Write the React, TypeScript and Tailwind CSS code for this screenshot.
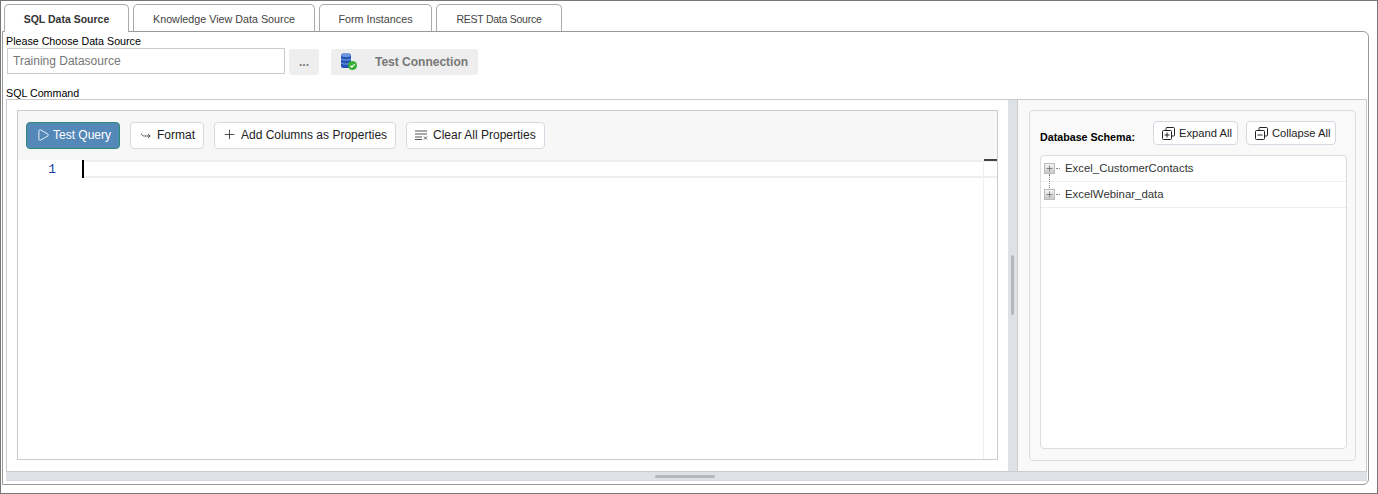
import { Play, Plus } from 'lucide-react';

function DatabaseIcon() {
  return (
    <svg width="18" height="18" viewBox="0 0 18 18">
      <rect x="1" y="0.500" width="10" height="14.500" rx="2" fill="#2456b8" />
      <ellipse cx="6" cy="2.200" rx="5" ry="1.800" fill="#6c94e0" />
      <path d="M1 6c1 1.400 9 1.400 10 0M1 10c1 1.400 9 1.400 10 0" stroke="#9db9ee" strokeWidth="0.800" fill="none" />
      <circle cx="12.500" cy="12.500" r="4.500" fill="#35b035" />
      <path d="M10.300 12.600l1.600 1.600 2.800-3" stroke="#fff" strokeWidth="1.200" fill="none" />
    </svg>
  );
}

function FormatIcon() {
  return (
    <svg width="12" height="12" viewBox="0 0 12 12" fill="none" stroke="#555" strokeWidth="1">
      <path d="M1.500 4.500c0 2 1.500 2.500 3 2.500H10" />
      <path d="M8 5l2.200 2L8 9" />
    </svg>
  );
}

function ClearIcon() {
  return (
    <svg width="13" height="10" viewBox="0 0 13 10" fill="none" stroke="#555" strokeWidth="1">
      <path d="M0 1h12M0 4h12M0 7h7M0 9.500h7" />
      <path d="M9 6.500l3 3M12 6.500l-3 3" />
    </svg>
  );
}

function StackIcon({ expand }: { expand: boolean }) {
  return (
    <svg width="13" height="13" viewBox="0 0 13 13" fill="none" stroke="#222" strokeWidth="1">
      <path d="M4 3V1.500a1 1 0 0 1 1-1h6.500a1 1 0 0 1 1 1V8a1 1 0 0 1-1 1H10" />
      <rect x="0.500" y="3.500" width="9" height="9" rx="1" />
      <path d="M2.500 8h5" />
      {expand && <path d="M5 5.500v5" />}
    </svg>
  );
}

function TreeToggle() {
  return (
    <span className="flex h-[11px] w-[11px] items-center justify-center border border-[#bbb] bg-gradient-to-b from-[#f4f4f4] to-[#c8c8c8] text-[#444]">
      <Plus size={9} strokeWidth={1.5} />
    </span>
  );
}

function ToolButton({ children, className }: { children: React.ReactNode; className: string }) {
  return (
    <button className={`flex h-[27px] items-center rounded-[4px] border border-[#d5dae2] bg-white pb-[2px] text-[12px] text-[#222] ${className}`}>
      {children}
    </button>
  );
}

const tabs = [
  { label: 'Knowledge View Data Source', className: 'w-[182px] pt-[2px] text-[10.750px]' },
  { label: 'Form Instances', className: 'w-[113px] pt-[2px] text-[10.750px]' },
  { label: 'REST Data Source', className: 'w-[126px] pt-[4px] text-[10.500px] tracking-[-0.25px]' },
];

export default function App() {
  return (
    <div className="flex h-[494px] w-[1378px] flex-col overflow-hidden border border-[#777] bg-white font-['Liberation_Sans',sans-serif]">
      {/* Tabs */}
      <div className="relative z-10 ml-[3px] mt-[3px] flex h-[28px] gap-[4px]">
        <div className="flex h-[28px] w-[125px] items-center justify-center rounded-t-[5px] border border-b-0 border-[#aaa] bg-white pt-[3px] text-[10.500px] font-bold text-[#333]">
          SQL Data Source
        </div>
        {tabs.map((tab) => (
          <div
            key={tab.label}
            className={`flex h-[27px] items-center justify-center rounded-t-[5px] border border-b-0 border-[#aaa] bg-white text-[#444] ${tab.className}`}
          >
            {tab.label}
          </div>
        ))}
      </div>

      {/* Panel */}
      <div className="-mt-[1px] ml-[1px] mr-[8px] flex h-[454px] flex-col rounded-br-[6px] rounded-tr-[6px] border border-[#999] pl-[3px] pr-[1px]">
        <div className="mt-[3px] h-[13px] text-[10.700px] leading-[13px] text-black">Please Choose Data Source</div>
        <div className="flex h-[27px] items-start">
          <div className="ml-[1px] flex h-[26px] w-[278px] items-center border border-[#ccc] px-[5px] text-[12px] text-[#777]">Training Datasource</div>
          <div className="ml-[4px] mt-[1px] flex h-[26px] w-[30px] items-center justify-center rounded-[3px] bg-[#eee] text-[12px] font-bold text-[#777]">...</div>
          <div className="ml-[12px] mt-[1px] flex h-[26px] w-[147px] items-center rounded-[3px] bg-[#eee] pl-[9px] text-[12px] font-bold text-[#777]">
            <DatabaseIcon />
            <span className="ml-[17px]">Test Connection</span>
          </div>
        </div>
        <div className="mt-[12px] h-[12px] text-[10.700px] leading-[12px] text-black">SQL Command</div>

        <div className="flex h-[372px] border-l border-r border-t border-[#ccc]">
          {/* Editor pane */}
          <div className="flex w-[1001px] flex-col px-[10px] pt-[10px]">
            <div className="flex h-[350px] flex-col border border-[#ccc]">
              <div className="flex h-[49px] items-start gap-[10px] bg-[#f7f7f8] pl-[8px] pt-[11px]">
                <button className="flex h-[27px] w-[94px] items-center rounded-[4px] border border-[#2e8b6f] bg-[#5488b8] pb-[2px] pl-[9px] text-[12px] text-white">
                  <Play size={14} strokeWidth={1.5} />
                  <span className="ml-[3px]">Test Query</span>
                </button>
                <ToolButton className="w-[74px] pl-[9px]">
                  <FormatIcon />
                  <span className="ml-[5px]">Format</span>
                </ToolButton>
                <ToolButton className="w-[182px] pl-[7px]">
                  <Plus size={15} strokeWidth={1.25} />
                  <span className="ml-[4px]">Add Columns as Properties</span>
                </ToolButton>
                <ToolButton className="w-[139px] pl-[8px]">
                  <ClearIcon />
                  <span className="ml-[5px]">Clear All Properties</span>
                </ToolButton>
              </div>
              <div className="relative flex-1 bg-white">
                <div className="flex h-[18px] items-stretch">
                  <div className="w-[64px] pr-[26px] text-right font-['Liberation_Mono',monospace] text-[13px] leading-[20px] text-[#1a3fa0]">1</div>
                  <div className="w-[2px] bg-black" />
                  <div className="flex-1 border-b-2 border-t-2 border-[#eee]" />
                </div>
                <div className="absolute bottom-0 right-0 top-0 w-[14px] border-l border-[#eee]">
                  <div className="-mt-px h-[2px] bg-[#444]" />
                </div>
              </div>
            </div>
          </div>

          {/* Vertical splitter */}
          <div className="flex w-[10px] items-center justify-center border-r border-[#ccc] bg-[#dee2e6] pb-[2px]">
            <div className="h-[60px] w-[3px] rounded-full bg-[#b3b8bd]" />
          </div>

          {/* Schema pane */}
          <div className="flex-1 bg-[#f9f9f9] pl-[11px] pr-[10px] pt-[10px]">
            <div className="h-[351px] rounded-[4px] border border-[#ddd] pl-[10px] pr-[8px] pt-[10px]">
              <div className="flex h-[24px] items-start">
                <div className="mt-[10px] w-[113px] text-[10.700px] font-bold leading-[13px] text-black">Database Schema:</div>
                <button className="flex h-[24px] w-[85px] items-center rounded-[4px] border border-[#d5dae2] bg-white pl-[8px] text-[11.200px] text-[#222]">
                  <StackIcon expand />
                  <span className="ml-[4px]">Expand All</span>
                </button>
                <button className="ml-[8px] flex h-[24px] w-[90px] items-center rounded-[4px] border border-[#d5dae2] bg-white pl-[8px] text-[11.200px] text-[#222]">
                  <StackIcon expand={false} />
                  <span className="ml-[4px]">Collapse All</span>
                </button>
              </div>
              <div className="mt-[10px] h-[294px] rounded-[4px] border border-[#ddd] bg-white">
                {['Excel_CustomerContacts', 'ExcelWebinar_data'].map((name, i) => (
                  <div key={name} className="relative flex h-[26px] items-center border-b border-[#eee] pl-[3px] text-[11.400px] text-[#333]">
                    <TreeToggle />
                    <span className="ml-[1px] w-[4px] border-t border-dotted border-[#888]" />
                    <span className="ml-[5px] pt-[1px]">{name}</span>
                    {i === 0 && <span className="absolute left-[8px] top-[18px] h-[14px] border-l border-dotted border-[#888]" />}
                  </div>
                ))}
              </div>
            </div>
          </div>
        </div>

        {/* Horizontal splitter */}
        <div className="flex h-[10px] items-center justify-center border-b border-t border-b-[#d5dbe2] border-t-[#ccc] bg-[#dee2e6] pr-[4px]">
          <div className="h-[3px] w-[60px] rounded-full bg-[#b3b8bd]" />
        </div>
      </div>
    </div>
  );
}
